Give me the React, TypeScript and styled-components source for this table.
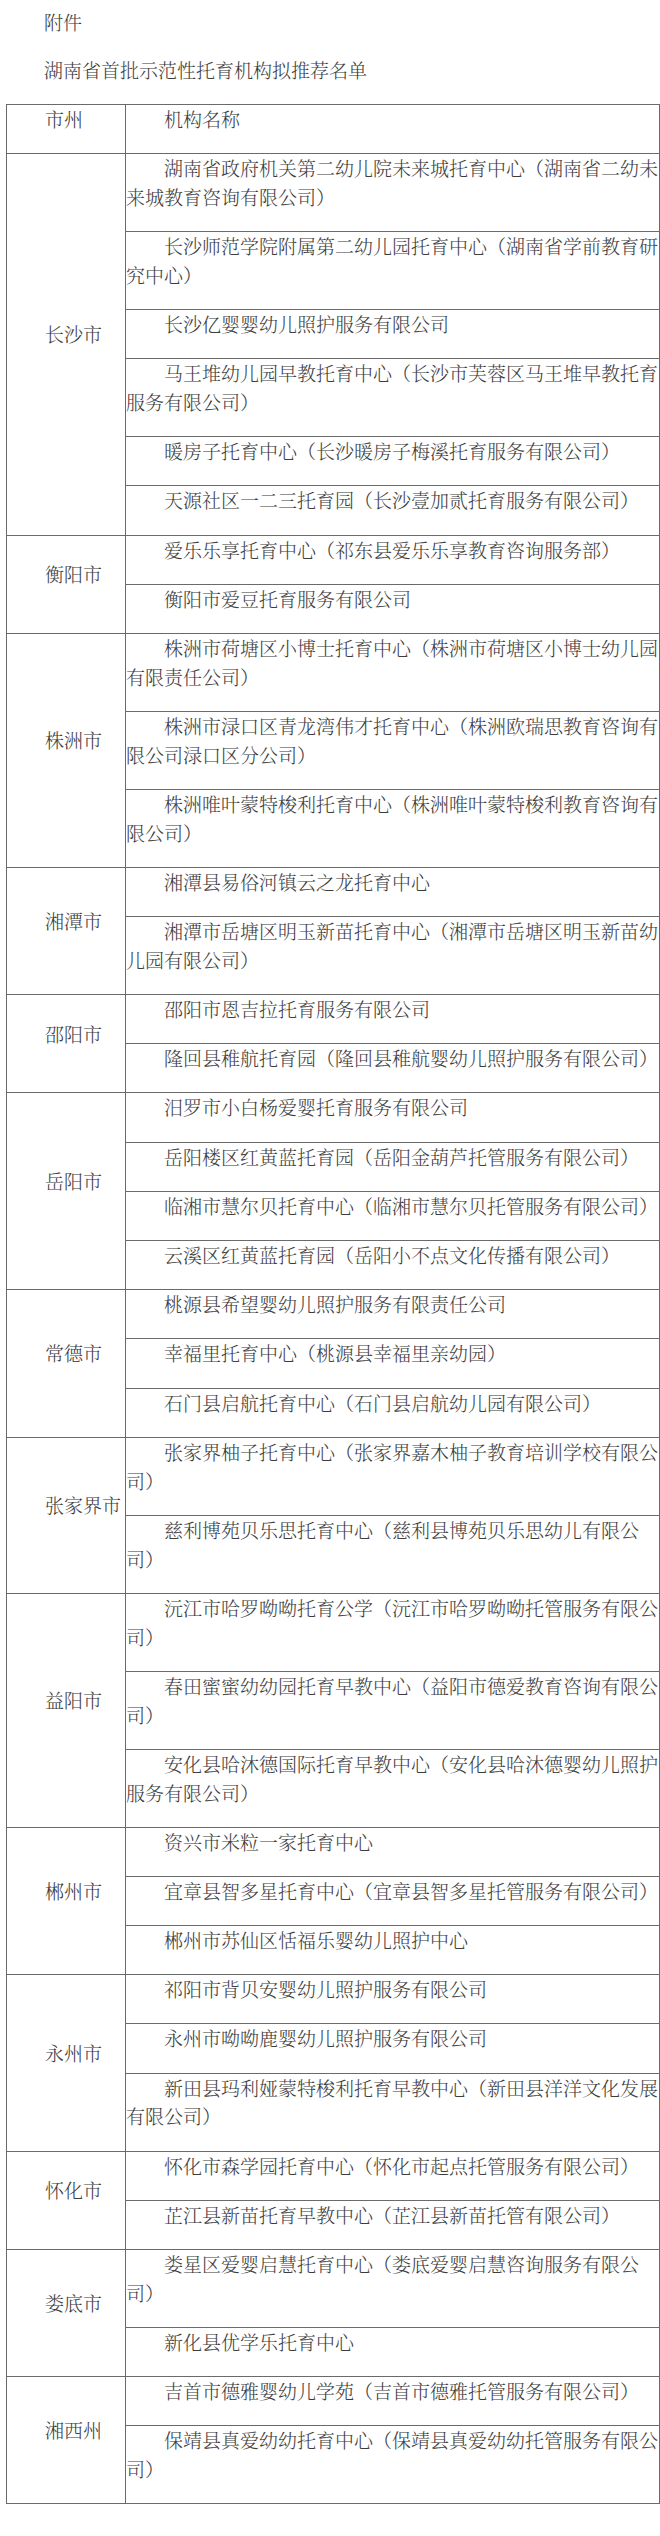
import React from "react";
import styled, { createGlobalStyle } from "styled-components";

type Item = string | { text: string; blankLine: boolean };

interface Group {
  city: string;
  items: Item[];
}

const groups: Group[] = [
  {
    city: "长沙市",
    items: [
      "湖南省政府机关第二幼儿院未来城托育中心（湖南省二幼未来城教育咨询有限公司）",
      "长沙师范学院附属第二幼儿园托育中心（湖南省学前教育研究中心）",
      { text: "长沙亿婴婴幼儿照护服务有限公司", blankLine: true },
      "马王堆幼儿园早教托育中心（长沙市芙蓉区马王堆早教托育服务有限公司）",
      "暖房子托育中心（长沙暖房子梅溪托育服务有限公司）",
      "天源社区一二三托育园（长沙壹加贰托育服务有限公司）",
    ],
  },
  {
    city: "衡阳市",
    items: ["爱乐乐享托育中心（祁东县爱乐乐享教育咨询服务部）", "衡阳市爱豆托育服务有限公司"],
  },
  {
    city: "株洲市",
    items: [
      "株洲市荷塘区小博士托育中心（株洲市荷塘区小博士幼儿园有限责任公司）",
      "株洲市渌口区青龙湾伟才托育中心（株洲欧瑞思教育咨询有限公司渌口区分公司）",
      "株洲唯叶蒙特梭利托育中心（株洲唯叶蒙特梭利教育咨询有限公司）",
    ],
  },
  {
    city: "湘潭市",
    items: ["湘潭县易俗河镇云之龙托育中心", "湘潭市岳塘区明玉新苗托育中心（湘潭市岳塘区明玉新苗幼儿园有限公司）"],
  },
  {
    city: "邵阳市",
    items: ["邵阳市恩吉拉托育服务有限公司", "隆回县稚航托育园（隆回县稚航婴幼儿照护服务有限公司）"],
  },
  {
    city: "岳阳市",
    items: [
      "汨罗市小白杨爱婴托育服务有限公司",
      "岳阳楼区红黄蓝托育园（岳阳金葫芦托管服务有限公司）",
      "临湘市慧尔贝托育中心（临湘市慧尔贝托管服务有限公司）",
      "云溪区红黄蓝托育园（岳阳小不点文化传播有限公司）",
    ],
  },
  {
    city: "常德市",
    items: [
      "桃源县希望婴幼儿照护服务有限责任公司",
      "幸福里托育中心（桃源县幸福里亲幼园）",
      "石门县启航托育中心（石门县启航幼儿园有限公司）",
    ],
  },
  {
    city: "张家界市",
    items: [
      "张家界柚子托育中心（张家界嘉木柚子教育培训学校有限公司）",
      "慈利博苑贝乐思托育中心（慈利县博苑贝乐思幼儿有限公司）",
    ],
  },
  {
    city: "益阳市",
    items: [
      "沅江市哈罗呦呦托育公学（沅江市哈罗呦呦托管服务有限公司）",
      "春田蜜蜜幼幼园托育早教中心（益阳市德爱教育咨询有限公司）",
      "安化县哈沐德国际托育早教中心（安化县哈沐德婴幼儿照护服务有限公司）",
    ],
  },
  {
    city: "郴州市",
    items: [
      "资兴市米粒一家托育中心",
      "宜章县智多星托育中心（宜章县智多星托管服务有限公司）",
      "郴州市苏仙区恬福乐婴幼儿照护中心",
    ],
  },
  {
    city: "永州市",
    items: [
      "祁阳市背贝安婴幼儿照护服务有限公司",
      "永州市呦呦鹿婴幼儿照护服务有限公司",
      "新田县玛利娅蒙特梭利托育早教中心（新田县洋洋文化发展有限公司）",
    ],
  },
  {
    city: "怀化市",
    items: ["怀化市森学园托育中心（怀化市起点托管服务有限公司）", "芷江县新苗托育早教中心（芷江县新苗托管有限公司）"],
  },
  {
    city: "娄底市",
    items: ["娄星区爱婴启慧托育中心（娄底爱婴启慧咨询服务有限公司）", "新化县优学乐托育中心"],
  },
  {
    city: "湘西州",
    items: ["吉首市德雅婴幼儿学苑（吉首市德雅托管服务有限公司）", "保靖县真爱幼幼托育中心（保靖县真爱幼幼托管服务有限公司）"],
  },
];

const GlobalStyle = createGlobalStyle`
  html, body {
    margin: 0;
    padding: 0;
    background: #fff;
  }
  body {
    font-family: "Noto Serif CJK SC", "Noto Sans CJK SC", "Noto Sans", sans-serif;
    color: #3d3d3d;
  }
`;

const Page = styled.div`
  width: 654px;
  padding: 7.5px 0 0 6px;
`;

const Para = styled.p`
  margin: 0 0 19.4px;
  font-size: 19px;
  line-height: 28.8px;
  font-weight: 300;
  text-indent: 2em;
`;

const Table = styled.table`
  width: 654px;
  border-collapse: collapse;
  table-layout: fixed;
`;

const Cell = styled.td<{ $city?: boolean }>`
  padding: 0;
  border: 1px solid #6a6a6a;
  vertical-align: ${(p) => (p.$city ? "middle" : "top")};
`;

export default function App() {
  return (
    <>
      <GlobalStyle />
      <Page>
        <Para>附件</Para>
        <Para>湖南省首批示范性托育机构拟推荐名单</Para>
        <Table>
          <colgroup>
            <col style={{ width: 119 }} />
            <col />
          </colgroup>
          <tbody>
            <tr>
              <Cell>
                <Para>市州</Para>
              </Cell>
              <Cell>
                <Para>机构名称</Para>
              </Cell>
            </tr>
            {groups.map((g) =>
              g.items.map((item, i) => {
                const text = typeof item === "string" ? item : item.text;
                const blank = typeof item !== "string" && item.blankLine;
                return (
                  <tr key={g.city + i}>
                    {i === 0 && (
                      <Cell $city rowSpan={g.items.length}>
                        <Para>{g.city}</Para>
                      </Cell>
                    )}
                    <Cell>
                      <Para>
                        {text}
                        {blank && <br />}
                      </Para>
                    </Cell>
                  </tr>
                );
              })
            )}
          </tbody>
        </Table>
      </Page>
    </>
  );
}
